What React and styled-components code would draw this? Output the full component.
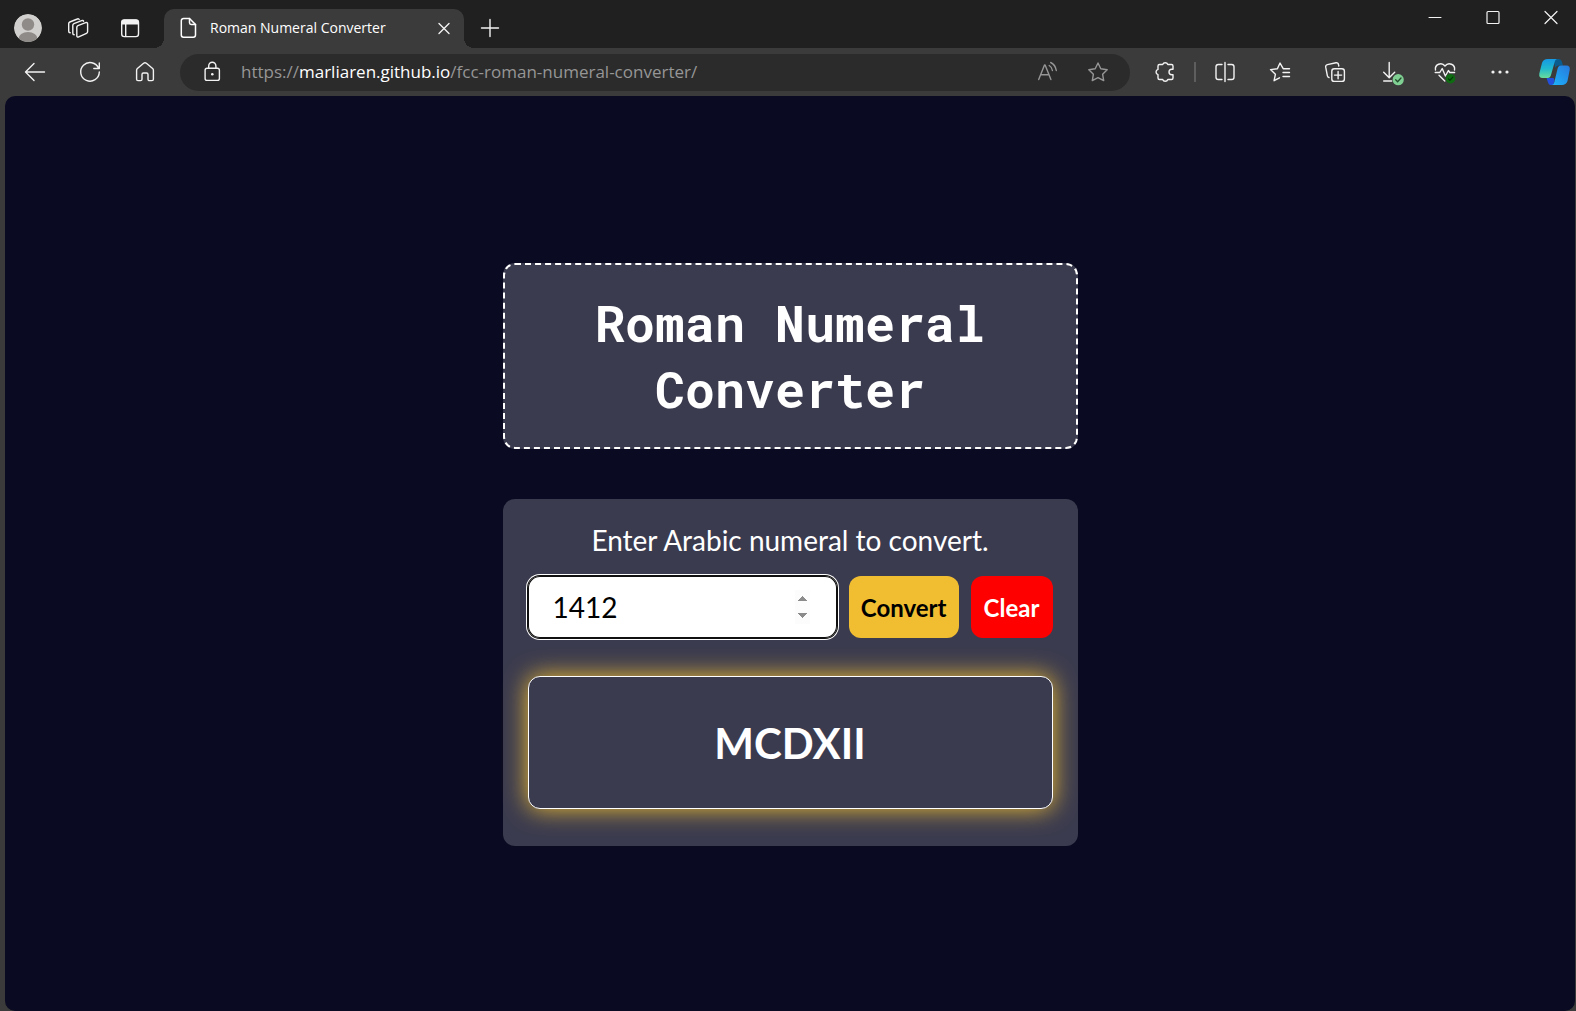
import React, { useState } from "react";
import styled, { createGlobalStyle, css } from "styled-components";

const colors = {
  frame: "#202020",
  chrome: "#3b3b3b",
  field: "#2b2b2b",
  icon: "#f2f2f2",
  muted: "#969696",
  page: "#0a0a23",
  card: "#3b3b4f",
  gold: "#f1be32",
};

const uiFont = '"Open Sans", "Noto Sans", sans-serif';

const GlobalStyle = createGlobalStyle`
  *, *::before, *::after { box-sizing: border-box; }
  body { margin: 0; background: ${colors.chrome}; }
  button, input { font: inherit; margin: 0; }
`;

const Window = styled.div`
  display: flex;
  flex-direction: column;
  min-height: 100vh;
  background: ${colors.chrome};
  font-family: ${uiFont};
  color: #fff;
`;

const TitleBar = styled.header`
  display: flex;
  align-items: flex-end;
  height: 48px;
  padding-left: 10px;
  background: ${colors.frame};
`;

const IconButton = styled.button`
  display: flex;
  align-items: center;
  justify-content: center;
  flex: none;
  width: 36px;
  height: 36px;
  padding: 0;
  border: 0;
  border-radius: 6px;
  background: none;
  color: ${(p) => (p.$muted ? colors.muted : colors.icon)};
  cursor: pointer;
`;

const TitleTools = styled.div`
  display: flex;
  align-items: center;
  gap: 15px;
  height: 40px;
  margin-right: 16px;
`;

const Tab = styled.div`
  position: relative;
  display: flex;
  align-items: center;
  width: 300px;
  height: 39px;
  padding: 0 2px 2px 16px;
  border-radius: 10px 10px 0 0;
  background: ${colors.chrome};

  &::before,
  &::after {
    content: "";
    position: absolute;
    bottom: 0;
    width: 10px;
    height: 10px;
  }
  &::before {
    right: 100%;
    background: radial-gradient(circle at 0 0, transparent 10px, ${colors.chrome} 10px);
  }
  &::after {
    left: 100%;
    background: radial-gradient(circle at 100% 0, transparent 10px, ${colors.chrome} 10px);
  }
`;

const TabLabel = styled.button`
  display: flex;
  align-items: center;
  flex: 1;
  gap: 13px;
  padding: 0;
  border: 0;
  background: none;
  color: #fff;
  font-size: 14px;
  line-height: 20px;
  text-align: left;
  white-space: nowrap;
`;

const NewTab = styled.div`
  margin-left: 8px;
  height: 38px;
`;

const WindowControls = styled.div`
  display: flex;
  gap: 8px;
  align-self: flex-start;
  margin-left: auto;
`;

const WindowButton = styled(IconButton)`
  width: 50px;
`;

const Toolbar = styled.nav`
  display: flex;
  align-items: center;
  gap: 17px;
  height: 48px;
  padding: 0 3px 0 17px;
`;

const ToolGroup = styled.div`
  display: flex;
  align-items: center;
  gap: ${(p) => p.$gap || 19}px;
`;

const Divider = styled.span`
  width: 2px;
  height: 20px;
  background: #5e5e5e;
`;

const AddressBar = styled.div`
  display: flex;
  align-items: center;
  flex: 1;
  min-width: 0;
  height: 37px;
  padding: 0 14px;
  border-radius: 19px;
  background: ${colors.field};
`;

const Address = styled.a`
  flex: 1;
  min-width: 0;
  margin-left: 11px;
  overflow: hidden;
  color: ${colors.muted};
  font-size: 17px;
  line-height: 24px;
  text-decoration: none;
  white-space: nowrap;

  strong {
    color: #fff;
    font-weight: 400;
  }
`;

const Page = styled.main`
  display: flex;
  flex: 1;
  flex-direction: column;
  align-items: center;
  justify-content: center;
  gap: 50px;
  margin: 0 1px 0 5px;
  padding: 26px 24px 24px;
  border-radius: 10px;
  background: ${colors.page};
  font-family: Lato, sans-serif;
`;

const Panel = styled.div`
  width: 100%;
  max-width: 575px;
  border-radius: 12px;
  background: ${colors.card};
  text-align: center;
`;

const Heading = styled(Panel).attrs({ as: "h1" })`
  margin: 0;
  padding: 25px;
  border: 2px dashed #fff;
  font: 700 50px/66px "Roboto Mono", "DejaVu Sans Mono", monospace;
`;

const Card = styled(Panel).attrs({ as: "form" })`
  display: flex;
  flex-direction: column;
  padding: 25px 25px 37px;
`;

const Prompt = styled.label`
  font-size: 28px;
  line-height: 32px;
`;

const Controls = styled.div`
  display: flex;
  gap: 12px;
  height: 62px;
  margin: 20px 0 38px;
`;

const NumberField = styled.input`
  flex: 1;
  min-width: 0;
  padding: 0 27px 0 25px;
  border: 0;
  border-radius: 12px;
  outline: none;
  background: #fff;
  box-shadow: inset 0 0 0 1px #101010, 0 0 0 1px #101010, 0 0 0 2px #fff;
  color: #000;
  font-size: 28px;

  &::-webkit-inner-spin-button {
    opacity: 1;
  }
`;

const tones = {
  gold: css`
    background: ${colors.gold};
    color: #000;
  `,
  red: css`
    background: #f00;
    color: #fff;
  `,
};

const ActionButton = styled.button`
  min-width: 82px;
  padding: 0 12px;
  border: 0;
  border-radius: 12px;
  font-size: 24px;
  font-weight: 700;
  cursor: pointer;
  ${(p) => tones[p.$tone]}
`;

const Result = styled.output`
  display: flex;
  align-items: center;
  justify-content: center;
  height: 133px;
  border: 1px solid #fff;
  border-radius: 12px;
  background: ${colors.card};
  box-shadow: 0 0 25px ${colors.gold};
  font-size: 42px;
  font-weight: 700;
`;

const Glyph = styled.svg`
  flex: none;
  overflow: visible;
  fill: none;
  stroke: currentColor;
  stroke-linecap: round;
  stroke-linejoin: round;
`;

const Svg = ({ size = 24, children }) => (
  <Glyph
    width={size}
    height={size}
    viewBox={`0 0 ${size} ${size}`}
    strokeWidth="1.4"
    aria-hidden="true"
  >
    {children}
  </Glyph>
);

const icons = {
  avatar: (
    <Svg size={28}>
      <defs>
        <clipPath id="avatar-clip"><circle cx="14" cy="14" r="14" /></clipPath>
      </defs>
      <g clipPath="url(#avatar-clip)" stroke="none">
        <circle cx="14" cy="14" r="14" fill="#d2d0ce" />
        <circle cx="14" cy="10.5" r="6.2" fill="#8f8b88" />
        <ellipse cx="14" cy="25" rx="9.6" ry="7" fill="#8f8b88" />
      </g>
    </Svg>
  ),
  workspaces: (
    <Svg>
      <path d="M9.8 11.2c0-.8.4-1.3 1.1-1.6l7.8-3c1.1-.4 1.9.1 1.9 1.2v7.9c0 .8-.4 1.3-1.1 1.6l-7.8 3.6c-1.1.5-1.9 0-1.9-1.2z" />
      <path d="M7.2 18.800c-.9 0-1.400-.6-1.400-1.500V9.200c0-.8.4-1.300 1.100-1.600l7.700-3c1-.4 1.800 0 2 .6" />
      <path d="M3.200 16.800c-.9 0-1.500-.6-1.500-1.500V7.600c0-.8.4-1.300 1.100-1.600l7.500-3c.9-.4 1.700-.1 1.900.5" />
    </Svg>
  ),
  vertical: (
    <Svg>
      <rect x="3.700" y="4" width="16.800" height="16.600" rx="2.600" />
      <path d="M3.400 8.500V6.200C3.400 4.600 4.600 3.400 6.200 3.400H18c1.600 0 2.800 1.200 2.800 2.800v2.300z" fill="currentColor" stroke="none" />
      <path d="M7.700 8v12.400" />
    </Svg>
  ),
  document: (
    <Glyph width="17" height="22" viewBox="0 0 17 22" strokeWidth="1.500" aria-hidden="true">
      <path d="M3.500 1.500h6L15.500 7.500v10.500a2.200 2.200 0 0 1-2.200 2.200h-9.800A2.200 2.200 0 0 1 1.300 18V3.700a2.200 2.200 0 0 1 2.200-2.200z" />
      <path d="M9.500 1.500v4.300c0 1 .7 1.700 1.700 1.700h4.300" />
    </Glyph>
  ),
  close: <Svg><path d="M7 7.500l10 10M17 7.500L7 17.500" /></Svg>,
  plus: <Svg><path d="M12 3.500v17M3.500 12h17" /></Svg>,
  minimize: <Svg><path d="M6 11.500h12" strokeWidth="1" /></Svg>,
  maximize: <Svg><rect x="6" y="5.500" width="12" height="12" rx="1" strokeWidth="1.200" /></Svg>,
  closeWindow: <Svg><path d="M6 5.500l12 12M18 5.500L6 17.500" strokeWidth="1.200" /></Svg>,
  back: <Svg><path d="M21.500 12H2.800M11 3.500L2.500 12l8.500 8.500" /></Svg>,
  reload: <Svg><path d="M20.600 8.300A9.300 9.300 0 1 0 21.300 12M21.300 3v5.500h-5.500" /></Svg>,
  home: (
    <Svg>
      <path d="M3.600 10.200c0-.7.300-1.200.8-1.700l6.200-5.300c.9-.7 1.900-.7 2.800 0l6.200 5.300c.5.500.8 1 .8 1.700v9c0 .8-.6 1.400-1.400 1.400h-2.600c-.8 0-1.400-.6-1.400-1.400v-4.800c0-.8-.6-1.400-1.400-1.400h-3.200c-.8 0-1.400.6-1.400 1.400v4.800c0 .8-.6 1.400-1.400 1.400H5c-.8 0-1.400-.6-1.400-1.400z" />
    </Svg>
  ),
  lock: (
    <Svg>
      <rect x="5.100" y="8.200" width="14.300" height="12.200" rx="2" />
      <path d="M8.700 8V5.900a3.600 3.600 0 0 1 7.200 0V8" />
      <circle cx="12.300" cy="14.200" r="1.300" fill="currentColor" stroke="none" />
    </Svg>
  ),
  readAloud: (
    <Svg>
      <path d="M2.700 19.500L8.500 5h.6l5.800 14.500M4.600 14.800h8.300M13.200 5.500c1.800 1 2.900 2.700 3.200 5M14.700 2.500c3 1.400 5 4.200 5.600 8" />
    </Svg>
  ),
  star: (
    <Svg>
      <path d="M12 3l2.800 5.800 6.400.9-4.600 4.500 1.100 6.400-5.700-3-5.700 3 1.100-6.400-4.600-4.500 6.400-.9z" />
    </Svg>
  ),
  puzzle: (
    <Svg>
      <path d="M6.500 4.500h3.200a2.700 2.700 0 0 1 5.100 0H18.500c.9 0 1.500.6 1.500 1.500v3.200h-1.200a2.800 2.800 0 0 0 0 5.600H20V18c0 .9-.6 1.500-1.500 1.500h-3.700a2.700 2.700 0 0 1-5.100 0H6.500C5.600 19.500 5 18.900 5 18v-3.400a2.700 2.700 0 0 1 0-5.200V6c0-.9.6-1.500 1.500-1.500z" />
    </Svg>
  ),
  split: (
    <Svg>
      <path d="M12 2.500v19M9 4.500H5.300c-1.300 0-2.300 1-2.300 2.300v10.400c0 1.300 1 2.300 2.300 2.300H9M15 4.500h3.700c1.300 0 2.300 1 2.300 2.300v10.400c0 1.300-1 2.300-2.300 2.300H15" />
    </Svg>
  ),
  favorites: (
    <Svg>
      <path d="M21.500 8.700h-6.300L12 3 9.400 8.700l-6.900.9 4.900 4.700-1.300 6.400 5.400-2.900M15 12.500h6.500M15 16.500h6.500" />
    </Svg>
  ),
  collections: (
    <Svg>
      <rect x="8.800" y="8.800" width="12.600" height="12.600" rx="2.500" />
      <path d="M15.100 11.500v7.200M11.500 15.100h7.200" />
      <path d="M6 17.500c-.9-.2-1.400-.8-1.600-1.700L2.700 7.200c-.2-1.300.4-2.300 1.700-2.600l8.600-1.800c1.300-.2 2.300.5 2.500 1.800l.3 1.400" />
    </Svg>
  ),
  download: (
    <Svg>
      <path d="M11.200 2.500v15M5.700 12.200l5.500 5.500 5.500-5.500M5.700 21h8" />
      <circle cx="20.200" cy="19.700" r="5.600" fill="#7fcf93" stroke="none" />
      <path d="M17.700 19.800l1.900 1.900 3.400-3.700" stroke="#234b2c" strokeWidth="1.300" />
    </Svg>
  ),
  health: (
    <Svg>
      <path d="M2.500 10C1.500 4.500 8.500 1.500 12 6c3.500-4.500 10.500-1.500 9.500 4M2.200 12.500h4.600l2.400-4 3.200 7.500 3-5.500 1.400 2h4.800M6 15.200l5.800 5.800" />
      <circle cx="17.500" cy="18.700" r="4.800" fill="#0f6b12" stroke="none" />
      <path d="M15.400 18.800l1.500 1.500 2.900-3.100" stroke="#043806" strokeWidth="1.200" />
    </Svg>
  ),
  more: (
    <Svg>
      <g fill="currentColor" stroke="none">
        <circle cx="5" cy="12" r="1.600" />
        <circle cx="12" cy="12" r="1.600" />
        <circle cx="19" cy="12" r="1.600" />
      </g>
    </Svg>
  ),
  copilot: (
    <Svg size={32}>
      <defs>
        <linearGradient id="cp-left" x1="0" y1="0" x2="0" y2="1">
          <stop offset="0" stopColor="#1698e4" />
          <stop offset=".5" stopColor="#20b8cf" />
          <stop offset="1" stopColor="#69dc9a" />
        </linearGradient>
        <linearGradient id="cp-right" x1="1" y1="0" x2="0" y2="1">
          <stop offset="0" stopColor="#2878dc" />
          <stop offset="1" stopColor="#1cb5fb" />
        </linearGradient>
      </defs>
      <g stroke="none">
        <path d="M14 3h5.500c1.800 0 2.700 1 3.300 2.600L24 9.500h-4c-2 0-3 1-3.500 2.500z" fill="#0b5c8e" />
        <path d="M7.500 22h7l1 2-1.200 5h-2c-1.800 0-2.800-1-3.300-2.600z" fill="#2250dc" />
        <path d="M8.500 3H18.500c-1.500 0-2.300 1.200-2.800 2.700L12 19c-.6 2-1.500 3-3.200 3H3.500C1 22 -.2 20.500.3 17.500L3 7C3.800 4.300 6 3 8.500 3z" fill="url(#cp-left)" />
        <path d="M23 29H12.500c1.500 0 2.300-1.200 2.800-2.700L18.500 13c.6-2 1.500-3.500 3.200-3.500h5.800c2.500 0 3.800 1.500 3.200 4.500L28.500 25c-.8 2.700-3 4-5.500 4z" fill="url(#cp-right)" />
      </g>
    </Svg>
  ),
};

const NUMERALS = [
  [1000, "M"], [900, "CM"], [500, "D"], [400, "CD"],
  [100, "C"], [90, "XC"], [50, "L"], [40, "XL"],
  [10, "X"], [9, "IX"], [5, "V"], [4, "IV"], [1, "I"],
];

function toRoman(value) {
  let rest = Number(value);
  if (!Number.isInteger(rest) || rest < 1 || rest > 3999) return "";
  let text = "";
  for (const [amount, symbol] of NUMERALS) {
    while (rest >= amount) {
      text += symbol;
      rest -= amount;
    }
  }
  return text;
}

const Tool = ({ label, icon, ...rest }) => (
  <IconButton type="button" aria-label={label} {...rest}>
    {icons[icon]}
  </IconButton>
);

function BrowserChrome() {
  return (
    <>
      <TitleBar>
        <TitleTools>
          <Tool label="Profile" icon="avatar" />
          <Tool label="Workspaces" icon="workspaces" />
          <Tool label="Tab actions" icon="vertical" />
        </TitleTools>
        <Tab>
          <TabLabel type="button">
            {icons.document}
            Roman Numeral Converter
          </TabLabel>
          <Tool label="Close tab" icon="close" />
        </Tab>
        <NewTab>
          <Tool label="New tab" icon="plus" />
        </NewTab>
        <WindowControls>
          <WindowButton type="button" aria-label="Minimize">{icons.minimize}</WindowButton>
          <WindowButton type="button" aria-label="Maximize">{icons.maximize}</WindowButton>
          <WindowButton type="button" aria-label="Close">{icons.closeWindow}</WindowButton>
        </WindowControls>
      </TitleBar>
      <Toolbar>
        <ToolGroup>
          <Tool label="Back" icon="back" />
          <Tool label="Refresh" icon="reload" />
          <Tool label="Home" icon="home" />
        </ToolGroup>
        <AddressBar>
          <Tool label="Site information" icon="lock" />
          <Address href="https://marliaren.github.io/fcc-roman-numeral-converter/">
            https://<strong>marliaren.github.io</strong>/fcc-roman-numeral-converter/
          </Address>
          <ToolGroup $gap={14}>
            <Tool label="Read aloud" icon="readAloud" $muted />
            <Tool label="Add to favorites" icon="star" $muted />
          </ToolGroup>
        </AddressBar>
        <ToolGroup $gap={11}>
          <Tool label="Extensions" icon="puzzle" />
          <Divider />
          <ToolGroup>
            <Tool label="Split screen" icon="split" />
            <Tool label="Favorites" icon="favorites" />
            <Tool label="Collections" icon="collections" />
            <Tool label="Downloads" icon="download" />
            <Tool label="Browser essentials" icon="health" />
            <Tool label="Settings and more" icon="more" />
            <Tool label="Copilot" icon="copilot" />
          </ToolGroup>
        </ToolGroup>
      </Toolbar>
    </>
  );
}

export default function App() {
  const [value, setValue] = useState("1412");
  const [result, setResult] = useState(toRoman("1412"));

  const convert = (event) => {
    event.preventDefault();
    setResult(toRoman(value));
  };
  const clear = () => {
    setValue("");
    setResult("");
  };

  return (
    <Window>
      <GlobalStyle />
      <BrowserChrome />
      <Page>
        <Heading>Roman Numeral Converter</Heading>
        <Card onSubmit={convert}>
          <Prompt htmlFor="number">Enter Arabic numeral to convert.</Prompt>
          <Controls>
            <NumberField
              id="number"
              type="number"
              value={value}
              onChange={(event) => setValue(event.target.value)}
            />
            <ActionButton type="submit" $tone="gold">Convert</ActionButton>
            <ActionButton type="button" $tone="red" onClick={clear}>Clear</ActionButton>
          </Controls>
          <Result htmlFor="number">{result}</Result>
        </Card>
      </Page>
    </Window>
  );
}
